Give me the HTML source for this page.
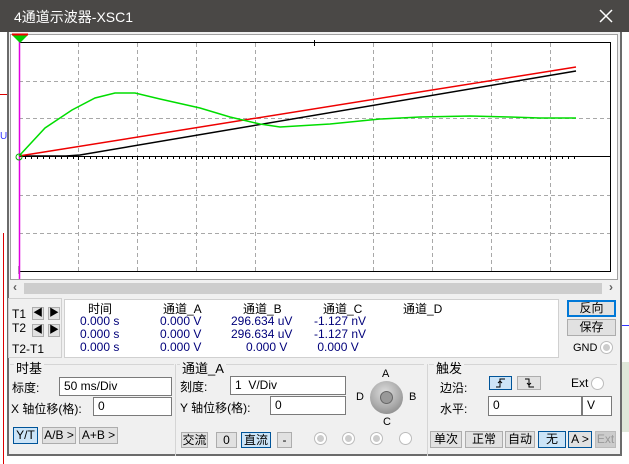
<!DOCTYPE html>
<html><head><meta charset="utf-8"><style>
*{margin:0;padding:0;box-sizing:border-box}
body{width:629px;height:464px;overflow:hidden;background:#fff;font-family:"Liberation Sans","Noto Sans CJK SC",sans-serif;font-size:12px;color:#000;position:relative}
.a{position:absolute;white-space:nowrap}
.btn{position:absolute;background:#e1e1e1;border:1px solid #adadad;text-align:center;font-size:12px;line-height:14px}
.blue{background:#cce4f7;border:1px solid #005499}
.inp{position:absolute;background:#fff;border:1px solid #7a7a7a;padding-left:4px;font-size:12px;line-height:16px}
.rad{position:absolute;width:13px;height:13px;border-radius:50%;border:1px solid #bcbcbc;background:#fff}
.rad.d::after{content:"";position:absolute;left:2px;top:2px;width:7px;height:7px;border-radius:50%;background:#ccc}
.grp{position:absolute;border-top:1px solid #d5d5d5}
.num{color:#00007a}
</style></head><body>
<div class="a" style="left:0;top:94px;width:7px;height:1px;background:#d00"></div>
<div class="a" style="left:3px;top:233px;width:1px;height:231px;background:#d00"></div>
<div class="a" style="left:0;top:131px;color:#33f;font-size:10px">U</div>
<div class="a" style="left:621px;top:362px;width:8px;height:70px;background:#dfe7d9"></div>
<div class="a" style="left:621px;top:325px;width:8px;height:1px;background:#33f"></div>
<div class="a" style="left:0;top:0;width:629px;height:32px;background:#4a4846"></div>
<div class="a" style="left:14px;top:7px;color:#fff;font-size:14px">4通道示波器-XSC1</div>
<svg class="a" style="left:599px;top:9px" width="14" height="14"><path d="M1 1L13 13M13 1L1 13" stroke="#fff" stroke-width="1.5"/></svg>
<div class="a" style="left:7px;top:32px;width:615px;height:424px;background:#f0f0f0;border:2px solid #6b6b6b;border-top:none"></div>
<div class="a" style="left:10px;top:34px;width:608px;height:246px;background:#fff;border:1px solid #a0a0a0"></div>
<svg class="a" style="left:0;top:0" width="629" height="300">
<g stroke="#a8a8a8" stroke-width="1" stroke-dasharray="4,3" fill="none">
<path d="M78.5 43V271M137.5 43V271M196.5 43V271M255.5 43V271M373.5 43V271M432.5 43V271M491.5 43V271M550.5 43V271"/>
<path d="M19 81.5H610M19 118.5H610M19 195.5H610M19 233.5H610"/>
</g>
<path d="M19 42.5H610.5V271.5H19" stroke="#000" fill="none"/>
<path d="M19 156.5H611" stroke="#000"/>
<path d="M314.5 40V46M19 274V266" stroke="#000"/>
<g stroke="#000"><path d="M25.5 156v3M31.5 156v3M37.5 156v3M43.5 156v3M49.5 156v3M55.5 156v3M61.5 156v3M67.5 156v3M73.5 156v3M78.5 156v4M84.5 156v3M90.5 156v3M96.5 156v3M102.5 156v3M108.5 156v3M114.5 156v3M120.5 156v3M126.5 156v3M132.5 156v3M137.5 156v4M143.5 156v3M149.5 156v3M155.5 156v3M161.5 156v3M167.5 156v3M173.5 156v3M179.5 156v3M185.5 156v3M191.5 156v3M196.5 156v4M202.5 156v3M208.5 156v3M214.5 156v3M220.5 156v3M226.5 156v3M232.5 156v3M238.5 156v3M244.5 156v3M250.5 156v3M255.5 156v4M261.5 156v3M267.5 156v3M273.5 156v3M279.5 156v3M285.5 156v3M291.5 156v3M297.5 156v3M303.5 156v3M309.5 156v3M314.5 156v4M320.5 156v3M326.5 156v3M332.5 156v3M338.5 156v3M344.5 156v3M350.5 156v3M356.5 156v3M362.5 156v3M368.5 156v3M373.5 156v4M379.5 156v3M385.5 156v3M391.5 156v3M397.5 156v3M403.5 156v3M409.5 156v3M415.5 156v3M421.5 156v3M427.5 156v3M432.5 156v4M438.5 156v3M444.5 156v3M450.5 156v3M456.5 156v3M462.5 156v3M468.5 156v3M474.5 156v3M480.5 156v3M486.5 156v3M491.5 156v4M497.5 156v3M503.5 156v3M509.5 156v3M515.5 156v3M521.5 156v3M527.5 156v3M533.5 156v3M539.5 156v3M545.5 156v3M550.5 156v4M556.5 156v3M562.5 156v3M568.5 156v3M574.5 156v3"/></g>
<path d="M19.5 36V279" stroke="#e000e0" stroke-width="1.5"/>
<path d="M12 35H28L20 43Z" fill="#0c0"/><path d="M12 34.5H28" stroke="#e00" stroke-width="2"/>
<path d="M19 156 L66 156 L80 155 L576 71" stroke="#000" stroke-width="1.5" fill="none"/>
<path d="M19 156 L576 67" stroke="#e00" stroke-width="1.5" fill="none"/>
<path d="M19 156 L45 128 L72 110 L95 98 L115 93 L135 93 L160 99 L200 108 L230 117 L260 124 L280 127 L330 124 L380 119 L420 117 L470 116 L510 117 L540 118 L576 118" stroke="#0d0" stroke-width="1.5" fill="none"/>
<circle cx="19" cy="157" r="3" stroke="#0a0" fill="none"/>
</svg>
<div class="a" style="left:10px;top:281px;width:608px;height:14px;background:#f0f0f0"></div>
<div class="a" style="left:24px;top:283px;width:578px;height:11px;background:#cdcdcd"></div>
<div class="a" style="left:13px;top:280px;color:#606060;font-size:12px;font-weight:bold">‹</div>
<div class="a" style="left:609px;top:280px;color:#606060;font-size:12px;font-weight:bold">›</div>
<div class="a" style="left:8px;top:298px;width:54px;height:60px;border:1px solid #d0d0d0"></div>
<div class="a" style="left:12px;top:307px">T1</div>
<div class="a" style="left:12px;top:321px">T2</div>
<div class="a" style="left:12px;top:342px">T2-T1</div>
<div class="btn" style="left:32px;top:307px;width:12px;height:13px;font-size:10px;line-height:11px">◀</div>
<div class="btn" style="left:48px;top:307px;width:12px;height:13px;font-size:10px;line-height:11px">▶</div>
<div class="btn" style="left:32px;top:324px;width:12px;height:13px;font-size:10px;line-height:11px">◀</div>
<div class="btn" style="left:48px;top:324px;width:12px;height:13px;font-size:10px;line-height:11px">▶</div>
<div class="a" style="left:64px;top:299px;width:495px;height:59px;background:#fff;border:1px solid #d0d0d0"></div>
<div class="a" style="left:88px;top:300px">时间</div>
<div class="a" style="left:163px;top:300px">通道_A</div>
<div class="a" style="left:243px;top:300px">通道_B</div>
<div class="a" style="left:323px;top:300px">通道_C</div>
<div class="a" style="left:403px;top:300px">通道_D</div>
<div class="a num" style="left:80px;top:315px;line-height:13px">0.000 s<br>0.000 s<br>0.000 s</div>
<div class="a num" style="left:160px;top:315px;line-height:13px">0.000 V<br>0.000 V<br>0.000 V</div>
<div class="a num" style="left:231px;top:315px;line-height:13px;text-align:center">296.634 uV<br>296.634 uV<br>&nbsp;&nbsp;&nbsp;0.000 V</div>
<div class="a num" style="left:314px;top:315px;line-height:13px">-1.127 nV<br>-1.127 nV<br>&nbsp;0.000 V</div>
<div class="btn" style="left:567px;top:300px;width:49px;height:17px;border:2px solid #0078d7;line-height:13px">反向</div>
<div class="btn" style="left:567px;top:319px;width:49px;height:17px">保存</div>
<div class="a" style="left:573px;top:342px;font-size:11px">GND</div>
<div class="rad d" style="left:600px;top:341px"></div>
<div class="grp" style="left:10px;top:364px;width:164px"></div>
<div class="a" style="left:14px;top:358px;background:#f0f0f0;padding:0 2px;font-size:13px">时基</div>
<div class="a" style="left:12px;top:379px">标度:</div>
<div class="inp" style="left:59px;top:377px;width:113px;height:19px">50 ms/Div</div>
<div class="a" style="left:11px;top:400px">X 轴位移(格):</div>
<div class="inp" style="left:93px;top:397px;width:79px;height:19px">0</div>
<div class="btn blue" style="left:13px;top:427px;width:25px;height:17px">Y/T</div>
<div class="btn" style="left:42px;top:427px;width:34px;height:17px">A/B &gt;</div>
<div class="btn" style="left:79px;top:427px;width:39px;height:17px">A+B &gt;</div>
<div class="a" style="left:175px;top:364px;width:1px;height:92px;background:#d5d5d5"></div>
<div class="grp" style="left:177px;top:364px;width:247px"></div>
<div class="a" style="left:180px;top:358px;background:#f0f0f0;padding:0 2px;font-size:13px">通道_A</div>
<div class="a" style="left:180px;top:378px">刻度:</div>
<div class="inp" style="left:230px;top:376px;width:116px;height:19px">1 &nbsp;V/Div</div>
<div class="a" style="left:180px;top:399px">Y 轴位移(格):</div>
<div class="inp" style="left:270px;top:396px;width:76px;height:19px">0</div>
<div class="btn" style="left:181px;top:432px;width:27px;height:16px">交流</div>
<div class="btn" style="left:216px;top:432px;width:21px;height:16px">0</div>
<div class="btn blue" style="left:241px;top:432px;width:30px;height:16px">直流</div>
<div class="btn" style="left:277px;top:432px;width:15px;height:16px">-</div>
<div class="rad d" style="left:314px;top:432px"></div>
<div class="rad d" style="left:342px;top:432px"></div>
<div class="rad d" style="left:370px;top:432px"></div>
<div class="rad" style="left:399px;top:432px"></div>
<div class="a" style="left:382px;top:368px;font-size:11px">A</div>
<div class="a" style="left:356px;top:391px;font-size:11px">D</div>
<div class="a" style="left:409px;top:391px;font-size:11px">B</div>
<div class="a" style="left:383px;top:416px;font-size:11px">C</div>
<div class="a" style="left:370px;top:381px;width:33px;height:33px;border-radius:50%;background:radial-gradient(circle at 45% 35%,#ddd,#aaa 55%,#777)"></div>
<div class="a" style="left:380px;top:391px;width:13px;height:13px;border-radius:50%;background:#999;border:1px solid #666"></div>
<div class="a" style="left:427px;top:364px;width:1px;height:92px;background:#d5d5d5"></div>
<div class="grp" style="left:429px;top:364px;width:188px"></div>
<div class="a" style="left:434px;top:358px;background:#f0f0f0;padding:0 2px;font-size:13px">触发</div>
<div class="a" style="left:440px;top:379px">边沿:</div>
<div class="btn blue" style="left:489px;top:376px;width:23px;height:14px"><svg width="21" height="12" style="display:block"><path d="M6 10H10V2H15M8 6L10 4L12 6" stroke="#000" fill="none"/></svg></div>
<div class="btn" style="left:517px;top:376px;width:24px;height:14px"><svg width="22" height="12" style="display:block"><path d="M7 2H11V10H16M9 6L11 8L13 6" stroke="#000" fill="none"/></svg></div>
<div class="a" style="left:571px;top:376px">Ext</div>
<div class="rad" style="left:591px;top:377px"></div>
<div class="a" style="left:440px;top:400px">水平:</div>
<div class="inp" style="left:488px;top:396px;width:94px;height:20px">0</div>
<div class="inp" style="left:582px;top:396px;width:30px;height:20px">V</div>
<div class="btn" style="left:430px;top:431px;width:32px;height:17px">单次</div>
<div class="btn" style="left:465px;top:431px;width:38px;height:17px">正常</div>
<div class="btn" style="left:505px;top:431px;width:30px;height:17px">自动</div>
<div class="btn blue" style="left:538px;top:431px;width:28px;height:17px">无</div>
<div class="btn" style="left:568px;top:431px;width:24px;height:17px;border-color:#005499">A &gt;</div>
<div class="btn" style="left:595px;top:431px;width:21px;height:17px;color:#999;background:#ccc;border-color:#bbb">Ext</div>
</body></html>
